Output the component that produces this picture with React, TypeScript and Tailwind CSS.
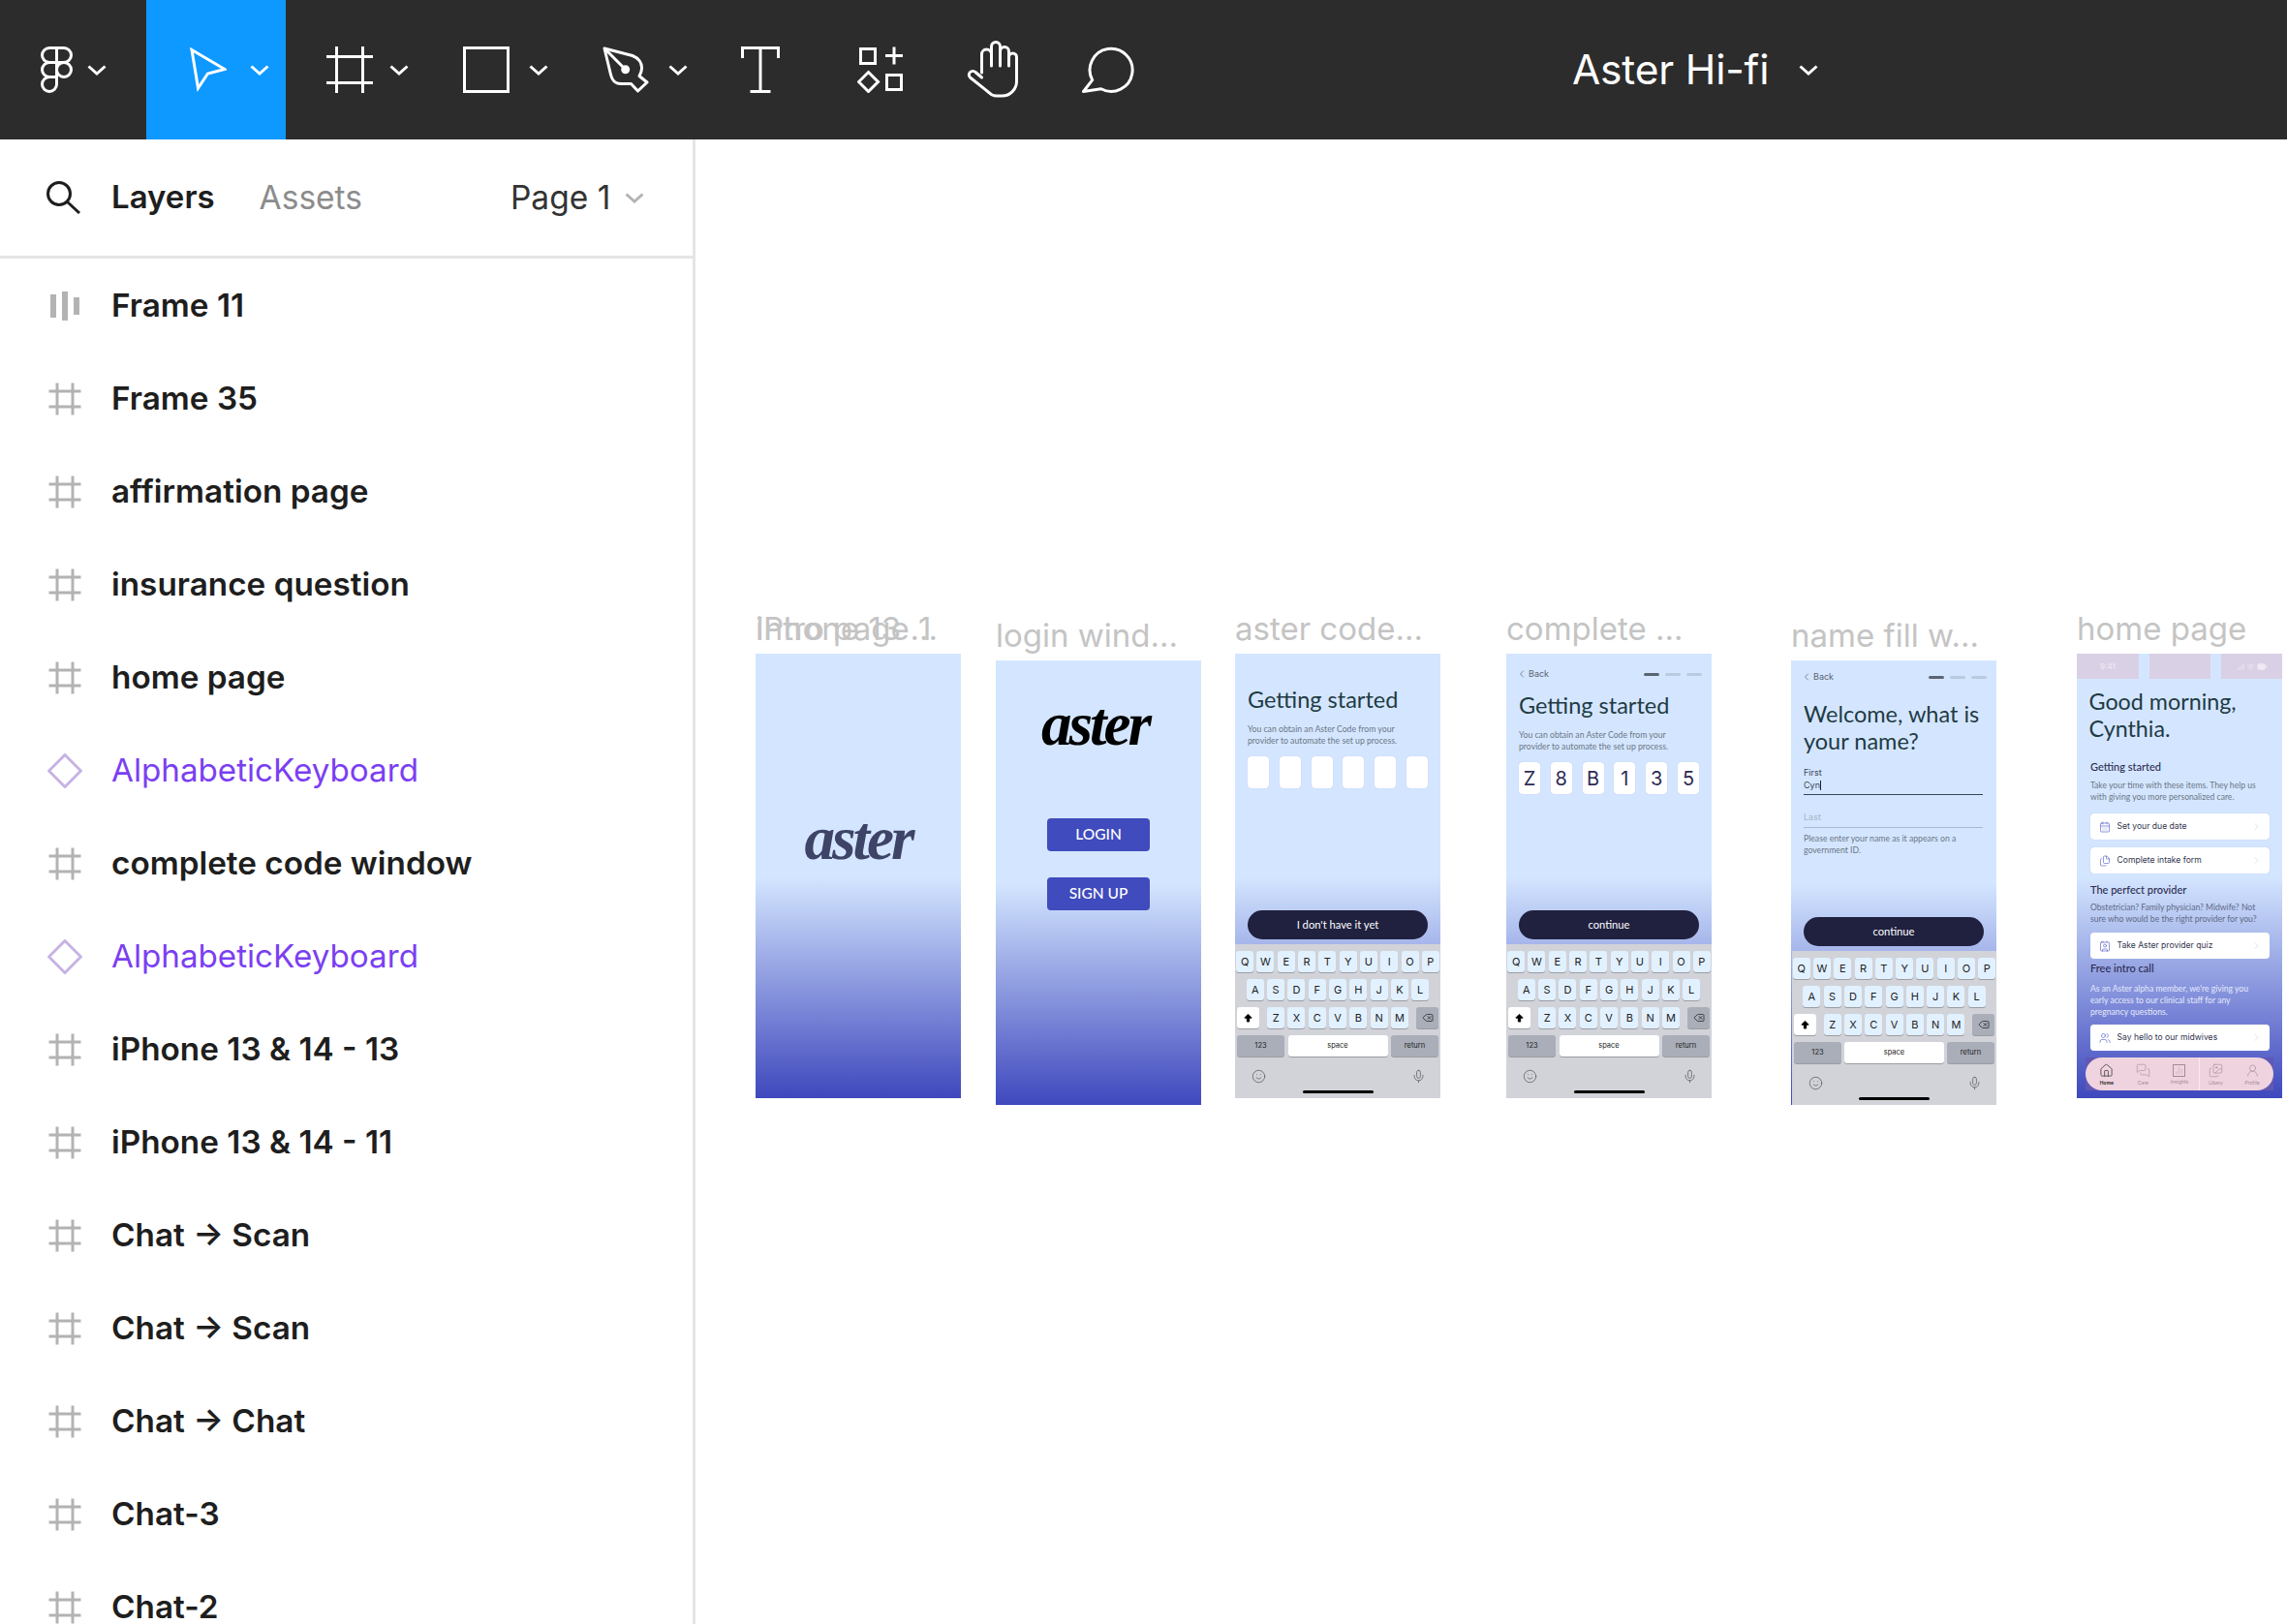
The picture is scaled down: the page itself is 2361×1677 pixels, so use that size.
import { ReactNode } from 'react'
import {
  ArrowBigUp,
  CalendarDays,
  ChartNoAxesColumn,
  ChevronLeft,
  ChevronRight,
  Contact,
  Delete,
  Files,
  House,
  Images,
  Mic,
  Signal,
  Smile,
  UserRound,
  Users,
  Wifi,
  BatteryFull,
  MessagesSquare,
} from 'lucide-react'

const UI_FONT = "font-['Inter',sans-serif]"
const PHONE_FONT = "font-['Lato',sans-serif]"
const PHONE_BG = 'bg-[linear-gradient(180deg,#d4e6ff_50%,#3f48bd_100%)]'

type Layer = { name: string; kind: 'auto' | 'frame' | 'component' }

const layers: Layer[] = [
  { name: 'Frame 11', kind: 'auto' },
  { name: 'Frame 35', kind: 'frame' },
  { name: 'affirmation page', kind: 'frame' },
  { name: 'insurance question', kind: 'frame' },
  { name: 'home page', kind: 'frame' },
  { name: 'AlphabeticKeyboard', kind: 'component' },
  { name: 'complete code window', kind: 'frame' },
  { name: 'AlphabeticKeyboard', kind: 'component' },
  { name: 'iPhone 13 & 14 - 13', kind: 'frame' },
  { name: 'iPhone 13 & 14 - 11', kind: 'frame' },
  { name: 'Chat → Scan', kind: 'frame' },
  { name: 'Chat → Scan', kind: 'frame' },
  { name: 'Chat → Chat', kind: 'frame' },
  { name: 'Chat-3', kind: 'frame' },
  { name: 'Chat-2', kind: 'frame' },
]

function Caret({ className = 'stroke-white' }: { className?: string }) {
  return (
    <svg width="20" height="11" viewBox="0 0 20 11" fill="none" className={className} strokeWidth="3">
      <path d="M1.5 1.5L10 9L18.5 1.5" />
    </svg>
  )
}

function ToolIcon({ w, h, children }: { w: number; h: number; children: ReactNode }) {
  return (
    <svg width={w} height={h} viewBox={`0 0 ${w} ${h}`} fill="none" stroke="white" strokeWidth="3" className="shrink-0">
      {children}
    </svg>
  )
}

function Toolbar() {
  return (
    <header className="flex h-[144px] shrink-0 items-center bg-[#2c2c2c] text-white">
      <div className="flex h-full w-[151px] items-center gap-[15px] pl-[42px]">
        <ToolIcon w={33} h={48}>
          <path d="M16.5 1.5H9a7.5 7.5 0 0 0 0 15h7.5z" />
          <path d="M16.5 1.5H24a7.5 7.5 0 0 1 0 15h-7.5z" />
          <path d="M16.5 16.5H9a7.5 7.5 0 0 0 0 15h7.5z" />
          <circle cx="24" cy="24" r="7.5" />
          <path d="M9 31.5h7.5V39A7.5 7.5 0 1 1 9 31.5z" />
        </ToolIcon>
        <Caret />
      </div>
      <div className="flex h-full w-[144px] items-center gap-[24px] bg-[#0d99ff] pl-[45px]">
        <ToolIcon w={38} h={46}>
          <path d="M2 2.5L36 22.5L18.5 27L8.5 42Z" />
        </ToolIcon>
        <Caret />
      </div>
      <div className="flex h-full w-[144px] items-center gap-[17px] pl-[42px]">
        <ToolIcon w={48} h={48}>
          <path d="M10.5 0V48M37.5 0V48M0 10.5H48M0 37.5H48" />
        </ToolIcon>
        <Caret />
      </div>
      <div className="flex h-full w-[144px] items-center gap-[20px] pl-[39px]">
        <ToolIcon w={48} h={48}>
          <rect x="1.5" y="1.5" width="45" height="45" />
        </ToolIcon>
        <Caret />
      </div>
      <div className="flex h-full w-[144px] items-center gap-[20px] pl-[39px]">
        <ToolIcon w={48} h={48}>
          <path d="M2 2L31 9.5C37 12 41 17 40.5 23C40.3 26 39.5 28 38 30.5L46 37L36.5 46L29.5 38.5C25 38.5 20 39 15.5 38C11.5 37 9.5 33 8.5 29Z" strokeLinejoin="round" />
          <path d="M2 2L23.7 23.7" />
          <circle cx="23.7" cy="23.7" r="3" fill="white" />
        </ToolIcon>
        <Caret />
      </div>
      <div className="flex h-full w-[120px] items-center pl-[38px]">
        <ToolIcon w={40} h={48}>
          <path d="M1.5 12V1.5H38.5V12M20 1.5V46.5M9.5 46.5H30.5" />
        </ToolIcon>
      </div>
      <div className="flex h-full w-[113px] items-center pl-[38px]">
        <ToolIcon w={48} h={48}>
          <rect x="3.5" y="2.5" width="15" height="15" />
          <path d="M29 9.5H47M38 0.5V18.5" />
          <path d="M11.5 26.5L21.5 36.5L11.5 46.5L1.5 36.5Z" />
          <rect x="30.5" y="29.5" width="15" height="15" />
        </ToolIcon>
      </div>
      <div className="flex h-full w-[119px] items-center pl-[38px]">
        <ToolIcon w={54} h={60}>
          <path
            d="M15.5 33V14a5 5 0 0 1 10 0V26V6a4.5 4.5 0 0 1 9 0V26V11a4.5 4.5 0 0 1 9 0V26V17a4 4 0 0 1 8 0V42a15 15 0 0 1-15 15h-6a10 10 0 0 1-7-3L3.5 38a3.8 3.8 0 0 1 0-5.5a4 4 0 0 1 5.5 0L15.5 38"
            strokeLinejoin="round"
            strokeLinecap="round"
          />
        </ToolIcon>
      </div>
      <div className="flex h-full w-[54px] items-center pl-[38px]">
        <ToolIcon w={56} h={48}>
          <path d="M10.7 34.7L1.5 46.5L19.7 43.7A22 22 0 1 0 10.7 34.7Z" strokeLinejoin="round" />
        </ToolIcon>
      </div>
      <div className={`ml-[490px] flex items-center gap-[31px] ${UI_FONT}`}>
        <span className="text-[42.5px] leading-none tracking-[-0.2px]">Aster Hi-fi</span>
        <Caret />
      </div>
    </header>
  )
}

function LayerIcon({ kind }: { kind: Layer['kind'] }) {
  if (kind === 'auto') {
    return (
      <div className="flex h-[36px] w-[36px] items-center justify-center gap-[5.5px]">
        <div className="h-[24px] w-[6.5px] bg-[#b3b3b3]" />
        <div className="h-[30px] w-[6.5px] bg-[#b3b3b3]" />
        <div className="h-[18px] w-[6.5px] bg-[#b3b3b3]" />
      </div>
    )
  }
  if (kind === 'component') {
    return (
      <svg width="36" height="36" viewBox="0 0 36 36" fill="none" stroke="#c7b3e5" strokeWidth="3">
        <path d="M18 1.5L34.5 18L18 34.5L1.5 18Z" />
      </svg>
    )
  }
  return (
    <svg width="36" height="36" viewBox="0 0 36 36" fill="none" stroke="#b3b3b3" strokeWidth="3">
      <path d="M10 1.5V34.5M26 1.5V34.5M1.5 10H34.5M1.5 26H34.5" />
    </svg>
  )
}

function Sidebar() {
  return (
    <aside className={`flex w-[718px] shrink-0 flex-col border-r-[3px] border-[#e5e5e5] bg-white ${UI_FONT}`}>
      <div className="flex h-[123px] shrink-0 items-center border-b-[3px] border-[#e5e5e5] pl-[47px] text-[33.5px]">
        <svg width="36" height="34" viewBox="0 0 36 34" fill="none" stroke="#1e1e1e" strokeWidth="3">
          <circle cx="14" cy="13" r="11.5" />
          <path d="M22.5 21.5L35 33" />
        </svg>
        <span className="ml-[32px] text-[33px] font-semibold text-[#1e1e1e]">Layers</span>
        <span className="ml-[46px] text-[#8c8c8c]">Assets</span>
        <span className="ml-[153px] text-[#333333]">Page 1</span>
        <Caret className="ml-[15px] stroke-[#b3b3b3]" />
      </div>
      <ul className="flex flex-col pt-[1px]">
        {layers.map((layer, i) => (
          <li key={i} className="flex h-[96px] shrink-0 items-center pl-[49px]">
            <LayerIcon kind={layer.kind} />
            <span
              className={
                layer.kind === 'component'
                  ? 'ml-[30px] text-[33.2px] text-[#7b3ff2]'
                  : 'ml-[30px] text-[33.3px] font-semibold text-[#1e1e1e]'
              }
            >
              {layer.name}
            </span>
          </li>
        ))}
      </ul>
    </aside>
  )
}

function Key({ children, className = 'w-[18px] bg-[#e2f1ff] text-[#222] text-[11px]' }: { children?: ReactNode; className?: string }) {
  return (
    <div className={`flex h-[22px] items-center justify-center rounded-[3px] shadow-[0_1px_0_#9a9ca3] ${className}`}>
      {children}
    </div>
  )
}

function Keyboard({ inset = false }: { inset?: boolean }) {
  return (
    <div className={`flex h-[159px] shrink-0 flex-col bg-[#d1d3d9] pt-[7px] font-['Inter',sans-serif] ${inset ? 'ml-px' : ''}`}>
      <div className="flex justify-center gap-[3.3px]">
        {'QWERTYUIOP'.split('').map((k) => (
          <Key key={k}>{k}</Key>
        ))}
      </div>
      <div className="mt-[7px] flex justify-center gap-[3.3px]">
        {'ASDFGHJKL'.split('').map((k) => (
          <Key key={k}>{k}</Key>
        ))}
      </div>
      <div className="mt-[7px] flex justify-between px-[2px]">
        <Key className="w-[23px] bg-white text-black">
          <ArrowBigUp size={11} fill="black" strokeWidth={1} />
        </Key>
        <div className="flex gap-[3.3px]">
          {'ZXCVBNM'.split('').map((k) => (
            <Key key={k}>{k}</Key>
          ))}
        </div>
        <Key className="w-[23px] bg-[#a9aeb9] text-[#222]">
          <Delete size={12} strokeWidth={1.5} />
        </Key>
      </div>
      <div className="mt-[7px] flex justify-between px-[2px]">
        <Key className="w-[49px] bg-[#a9aeb9] text-[7.5px] text-[#222]">123</Key>
        <Key className="w-[103px] bg-white text-[7.5px] text-[#222]">space</Key>
        <Key className="w-[49px] bg-[#a9aeb9] text-[7.5px] text-[#222]">return</Key>
      </div>
      <div className="mt-[13px] flex justify-between pl-[17px] pr-[15px] text-[#55585f]">
        <Smile size={15} strokeWidth={1.2} />
        <Mic size={15} strokeWidth={1.2} />
      </div>
      <div className="mx-auto mt-[7px] h-[2.5px] w-[73px] rounded-full bg-black" />
    </div>
  )
}

function PhoneButton({ label }: { label: string }) {
  return (
    <div className="mx-[13px] mb-[5px] mt-auto flex h-[30px] items-center justify-center rounded-full bg-[#20203f] text-[11.2px] text-white">
      {label}
    </div>
  )
}

function TopNav() {
  return (
    <div className="flex h-[12px] items-center justify-between pl-[10px] pr-[10px] font-['Inter',sans-serif] text-[9px] text-[#5b6472]">
      <div className="flex items-center gap-[1px]">
        <ChevronLeft size={12} strokeWidth={1.5} />
        <span>Back</span>
      </div>
      <div className="flex gap-[6px]">
        <div className="h-[3px] w-[16px] rounded-full bg-[#5b6472]" />
        <div className="h-[3px] w-[16px] rounded-full bg-[#b9c9e0]" />
        <div className="h-[3px] w-[16px] rounded-full bg-[#b9c9e0]" />
      </div>
    </div>
  )
}

function CodeIntro() {
  return (
    <div className="mt-[11px] px-[13px] text-[8.7px] leading-[12px] text-[#6b7785]">
      <div>You can obtain an Aster Code from your</div>
      <div>provider to automate the set up process.</div>
    </div>
  )
}

function IntroScreen() {
  return (
    <div className={`flex h-full justify-center ${PHONE_BG}`}>
      <span className="mt-[156px] font-['Liberation_Serif',serif] text-[63px] font-bold italic leading-[70px] tracking-[-3px] text-[#3d4468]">
        aster
      </span>
    </div>
  )
}

function LoginScreen() {
  return (
    <div className={`flex h-full flex-col items-center ${PHONE_BG}`}>
      <span className="mr-[7px] mt-[31px] font-['Liberation_Serif',serif] text-[63px] font-bold italic leading-[70px] tracking-[-3px] text-black">
        aster
      </span>
      <div className="mt-[62px] flex h-[34px] w-[106px] items-center justify-center rounded-[4px] bg-[#404bbd] text-[15.5px] font-medium text-white">
        LOGIN
      </div>
      <div className="mt-[27px] flex h-[34px] w-[106px] items-center justify-center rounded-[4px] bg-[#404bbd] text-[15.5px] font-medium text-white">
        SIGN UP
      </div>
    </div>
  )
}

function CodeScreen() {
  return (
    <div className={`flex h-full flex-col ${PHONE_BG}`}>
      <h2 className="ml-[13px] mt-[34px] text-[23.5px] leading-[27px] text-[#1f3b44]">Getting started</h2>
      <CodeIntro />
      <div className="mt-[10px] flex justify-between px-[13px]">
        {[0, 1, 2, 3, 4, 5].map((i) => (
          <div key={i} className="h-[33px] w-[22px] rounded-[4px] bg-white shadow-[0_0_1px_#a9bbd4]" />
        ))}
      </div>
      <PhoneButton label="I don't have it yet" />
      <Keyboard />
    </div>
  )
}

function CompleteCodeScreen() {
  return (
    <div className={`flex h-full flex-col ${PHONE_BG}`}>
      <div className="pt-[15px]">
        <TopNav />
      </div>
      <h2 className="ml-[13px] mt-[13px] text-[23.5px] leading-[27px] text-[#1f3b44]">Getting started</h2>
      <CodeIntro />
      <div className="mt-[10px] flex justify-between px-[13px]">
        {['Z', '8', 'B', '1', '3', '5'].map((c) => (
          <div
            key={c}
            className="flex h-[33px] w-[22px] items-center justify-center rounded-[4px] bg-white font-['Inter',sans-serif] text-[20px] text-[#2d2a55] shadow-[0_0_1px_#a9bbd4]"
          >
            {c}
          </div>
        ))}
      </div>
      <PhoneButton label="continue" />
      <Keyboard />
    </div>
  )
}

function NameScreen() {
  return (
    <div className={`flex h-full flex-col ${PHONE_BG}`}>
      <div className="pt-[11px]">
        <TopNav />
      </div>
      <h2 className="mx-[13px] mt-[18px] text-[23.5px] leading-[28px] text-[#1f3b44]">
        Welcome, what is
        <br />
        your name?
      </h2>
      <div className="mx-[13px] mt-[14px] font-['Inter',sans-serif]">
        <div className="text-[9px] leading-[10px] text-[#3a4556]">First</div>
        <div className="mt-[2px] flex h-[12px] items-center text-[9px] text-[#3a4556]">
          Cyn
          <span className="h-[10px] w-px bg-[#20203f]" />
        </div>
        <div className="mt-[3px] h-px w-[185px] bg-[#2f4a52]" />
        <div className="mt-[17px] text-[9px] leading-[12px] text-[#a5b3c6]">Last</div>
        <div className="mt-[4px] h-px w-[185px] bg-[#a9bbd4]" />
      </div>
      <div className="mx-[13px] mt-[5px] text-[8.7px] leading-[12px] text-[#6b7785]">
        Please enter your name as it appears on a
        <br />
        government ID.
      </div>
      <PhoneButton label="continue" />
      <Keyboard inset />
    </div>
  )
}

function ActionCard({ icon, label }: { icon: ReactNode; label: string }) {
  return (
    <div className="mx-[13.5px] flex h-[27px] items-center rounded-[4px] bg-white pl-[9px] pr-[8px] font-['Inter',sans-serif] text-[8.6px] text-[#33364f] shadow-[0_0_1px_#9fb0d8]">
      <span className="w-[19px] text-[#4a55c4]">{icon}</span>
      <span>{label}</span>
      <ChevronRight size={11} strokeWidth={1} className="ml-auto text-[#b8bcc6]" />
    </div>
  )
}

function NavItem({ icon, label, active = false }: { icon: ReactNode; label: string; active?: boolean }) {
  return (
    <div className={`flex w-[38px] flex-col items-center ${active ? 'text-[#333333]' : 'text-[#a58b98]'}`}>
      {icon}
      <span className={`mt-[2px] text-[5px] leading-[6px] ${active ? 'font-bold' : ''}`}>{label}</span>
    </div>
  )
}

function HomeScreen() {
  return (
    <div className={`flex h-full flex-col ${PHONE_BG}`}>
      <div className="flex h-[26px] shrink-0 justify-between">
        <div className="flex w-[64px] items-center justify-center bg-[#d9d0e5] font-['Inter',sans-serif] text-[8px] font-medium text-[#efe9f4]">
          9:41
        </div>
        <div className="w-[63px] bg-[#d9d0e5]" />
        <div className="flex w-[63px] items-center justify-center gap-[2px] bg-[#d9d0e5] text-[#efe9f4]">
          <Signal size={9} />
          <Wifi size={9} />
          <BatteryFull size={11} fill="#efe9f4" />
        </div>
      </div>
      <h2 className="ml-[12.5px] mt-[10px] text-[23.3px] leading-[27.5px] text-[#1f3b44]">
        Good morning,
        <br />
        Cynthia.
      </h2>
      <h3 className="ml-[14px] mt-[20px] text-[11px] font-medium leading-[12px] text-[#2b2b4f]">Getting started</h3>
      <p className="ml-[14px] mt-[7px] text-[8.6px] leading-[12px] text-[#6b7785]">
        Take your time with these items. They help us
        <br />
        with giving you more personalized care.
      </p>
      <div className="mt-[11px]">
        <ActionCard icon={<CalendarDays size={12} strokeWidth={1.2} />} label="Set your due date" />
      </div>
      <div className="mt-[8px]">
        <ActionCard icon={<Files size={12} strokeWidth={1.2} />} label="Complete intake form" />
      </div>
      <h3 className="ml-[14px] mt-[11px] text-[11px] font-medium leading-[12px] text-[#2b2b4f]">The perfect provider</h3>
      <p className="ml-[14px] mt-[6px] text-[8.6px] leading-[12px] text-[#5f6a86]">
        Obstetrician? Family physician? Midwife? Not
        <br />
        sure who would be the right provider for you?
      </p>
      <div className="mt-[8px]">
        <ActionCard icon={<Contact size={12} strokeWidth={1.2} />} label="Take Aster provider quiz" />
      </div>
      <h3 className="ml-[14px] mt-[4px] text-[11px] font-medium leading-[12px] text-[#2b2b4f]">Free intro call</h3>
      <p className="ml-[14px] mt-[9px] text-[8.6px] leading-[12px] text-[#e4e9fb]">
        As an Aster alpha member, we're giving you
        <br />
        early access to our clinical staff for any
        <br />
        pregnancy questions.
      </p>
      <div className="mt-[7px]">
        <ActionCard icon={<Users size={12} strokeWidth={1.2} />} label="Say hello to our midwives" />
      </div>
      <div className="mx-[9px] mt-[7px] bg-[#6058b4]">
        <div className="relative flex h-[34px] items-center justify-around rounded-full bg-[#efd3de] px-[3px] font-['Inter',sans-serif]">
          <NavItem active label="Home" icon={<House size={15} strokeWidth={1.2} />} />
          <NavItem label="Care" icon={<MessagesSquare size={15} strokeWidth={1} />} />
          <NavItem
            label="Insights"
            icon={
              <div className="flex h-[13px] w-[13px] items-center justify-center border border-[#a58b98]">
                <ChartNoAxesColumn size={9} strokeWidth={1} />
              </div>
            }
          />
          <NavItem label="Libary" icon={<Images size={15} strokeWidth={1} />} />
          <NavItem label="Profile" icon={<UserRound size={15} strokeWidth={1} />} />
          <div className="absolute bottom-0 left-[117px] top-0 w-px bg-white/60" />
        </div>
      </div>
    </div>
  )
}

function CanvasFrame({ label, className, children }: { label: ReactNode; className: string; children: ReactNode }) {
  return (
    <section className={`absolute w-[212px] ${className}`}>
      <div className="relative h-[44px] whitespace-nowrap text-[33px] leading-[44px] text-[#c4c4c4]">{label}</div>
      <div className={`mt-[4px] h-[459px] w-[212px] overflow-hidden ${PHONE_FONT}`}>{children}</div>
    </section>
  )
}

function Canvas() {
  return (
    <main className={`relative flex-1 overflow-hidden bg-white ${UI_FONT}`}>
      <CanvasFrame
        className="left-[62px] top-[483px]"
        label={
          <>
            <span>iPhone 13 ...</span>
            <span className="absolute left-0 top-0">Intro page 1</span>
          </>
        }
      >
        <IntroScreen />
      </CanvasFrame>
      <CanvasFrame className="left-[310px] top-[490px]" label="login wind...">
        <LoginScreen />
      </CanvasFrame>
      <CanvasFrame className="left-[557px] top-[483px]" label="aster code...">
        <CodeScreen />
      </CanvasFrame>
      <CanvasFrame className="left-[837px] top-[483px]" label="complete ...">
        <CompleteCodeScreen />
      </CanvasFrame>
      <CanvasFrame className="left-[1131px] top-[490px]" label="name fill w...">
        <NameScreen />
      </CanvasFrame>
      <CanvasFrame className="left-[1426px] top-[483px]" label="home page">
        <HomeScreen />
      </CanvasFrame>
    </main>
  )
}

export default function App() {
  return (
    <div className="flex h-[1677px] w-[2361px] flex-col overflow-hidden bg-white">
      <Toolbar />
      <div className="flex min-h-0 flex-1">
        <Sidebar />
        <Canvas />
      </div>
    </div>
  )
}
